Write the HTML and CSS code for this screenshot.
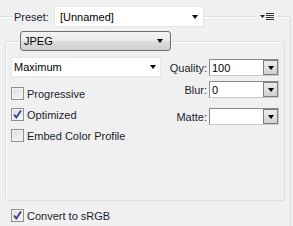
FILE: index.html
```html
<!DOCTYPE html>
<html>
<head>
  <title>Save for Web - Settings</title>
  <meta name="viewport" content="width=device-width, initial-scale=1">
  <link rel="stylesheet" href="styles.css">
</head>
<body>
  <div class="group outer">
    <div class="preset-row">
      <div class="legend">
        <span class="label">Preset:</span>
        <div class="select flat preset"><span>[Unnamed]</span><i class="arrow"></i></div>
      </div>
      <div class="menu-btn">
        <svg width="14" height="7" viewBox="0 0 14 7">
          <polygon points="0,2 5,2 2.5,5" fill="#222"/>
          <rect x="6" y="0" width="8" height="1" fill="#333"/>
          <rect x="6" y="2" width="8" height="1" fill="#333"/>
          <rect x="6" y="4" width="8" height="1" fill="#333"/>
          <rect x="6" y="6" width="8" height="1" fill="#333"/>
        </svg>
      </div>
    </div>

    <div class="group inner">
      <div class="format-row">
        <div class="select button format"><span>JPEG</span><i class="arrow"></i></div>
      </div>

      <div class="settings">
        <div class="col-left">
          <div class="select flat quality-preset"><span>Maximum</span><i class="arrow"></i></div>
          <label class="check"><span class="box"></span>Progressive</label>
          <label class="check"><span class="box on"><svg width="11" height="11" viewBox="0 0 11 11"><path d="M2 5.5 L4.3 8.5 L9 1.5" fill="none" stroke="#2b3f94" stroke-width="1.8"/></svg></span>Optimized</label>
          <label class="check"><span class="box"></span>Embed Color Profile</label>
        </div>
        <div class="col-right">
          <div class="field-row">
            <span class="label">Quality:</span>
            <div class="spin"><span>100</span><i class="spin-btn"><i class="arrow"></i></i></div>
          </div>
          <div class="field-row">
            <span class="label">Blur:</span>
            <div class="spin"><span>0</span><i class="spin-btn"><i class="arrow"></i></i></div>
          </div>
          <div class="field-row matte">
            <span class="label">Matte:</span>
            <div class="spin"><span></span><i class="spin-btn"><i class="arrow"></i></i></div>
          </div>
        </div>
      </div>
    </div>

    <label class="check srgb"><span class="box on"><svg width="11" height="11" viewBox="0 0 11 11"><path d="M2 5.5 L4.3 8.5 L9 1.5" fill="none" stroke="#2b3f94" stroke-width="1.8"/></svg></span>Convert to sRGB</label>
  </div>
</body>
</html>
```

FILE: styles.css
```css
body { margin: 0; background: #f0f0f0; font-family: "Liberation Sans", Arial, sans-serif; font-size: 11px; color: #1c1c2e; overflow: hidden; }

.group { border: 1px solid #d5dfe5; border-radius: 3px; box-shadow: inset 1px 1px 0 #fff; }
.outer { margin: 16px 2px 0 -2px; height: 210px; box-sizing: border-box; border-bottom: none; border-radius: 3px 3px 0 0; }
.inner { margin: 14px 5px 0 6px; height: 160px; box-sizing: border-box; }

.preset-row { display: flex; align-items: center; justify-content: space-between; height: 21px; margin-top: -11px; }
.legend { display: flex; align-items: center; margin-left: 13px; padding-left: 2px; background: #f0f0f0; }
.legend .label { width: 40px; }
.menu-btn { display: flex; align-items: center; width: 17px; height: 9px; padding-left: 3px; margin-right: 13px; background: #f0f0f0; }
.menu-btn svg { display: block; }

.select { display: flex; align-items: center; justify-content: space-between; box-sizing: border-box; padding: 0 5px 0 4px; color: #000; }
.select.flat { background: #fff; border: 1px solid #e6e6e6; }
.preset { width: 150px; height: 21px; padding-left: 5px; }
.arrow { display: block; width: 0; height: 0; border-left: 3.5px solid transparent; border-right: 3.5px solid transparent; border-top: 4px solid #000; }

.format-row { display: flex; margin: -11px 0 0 14px; }
.format { width: 151px; height: 20px; border: 1px solid #707070; border-radius: 3px; background: linear-gradient(#f2f2f2 0%, #ebebeb 50%, #dddddd 51%, #cfcfcf 100%); padding-left: 3px; padding-right: 7px; }

.settings { display: flex; justify-content: space-between; margin: 6px 5px 0 5px; }
.col-left { width: 150px; }
.quality-preset { height: 20px; padding-left: 2px; padding-right: 4px; }

.check { display: flex; align-items: center; height: 21px; }
.col-left .quality-preset + .check { margin-top: 6px; }
.box { display: block; width: 11px; height: 11px; margin-right: 3px; border: 1px solid #8f8f8f; background: linear-gradient(135deg, #dcdcdc, #f8f8f8); box-shadow: inset 0 0 0 1px #f4f4f4; }
.box svg { display: block; margin: 0; }
.srgb { margin: 4px 0 0 12px; }

.col-right { display: flex; flex-direction: column; align-items: flex-end; padding-top: 2px; }
.field-row { display: flex; align-items: center; height: 17px; margin-bottom: 5px; }
.field-row.matte { margin-top: 5px; }
.field-row .label { margin-right: 2px; }
.spin { display: flex; align-items: center; justify-content: space-between; box-sizing: border-box; width: 70px; height: 17px; background: #fff; border: 1px solid #8b8b8b; border-right-color: #c9c9c9; border-bottom-color: #c9c9c9; padding-left: 2px; color: #000; }
.spin-btn { display: flex; align-items: center; justify-content: center; width: 15px; height: 15px; box-sizing: border-box; border: 1px solid #7d7d7d; background: linear-gradient(#ececec, #d0d0d0); }
```
